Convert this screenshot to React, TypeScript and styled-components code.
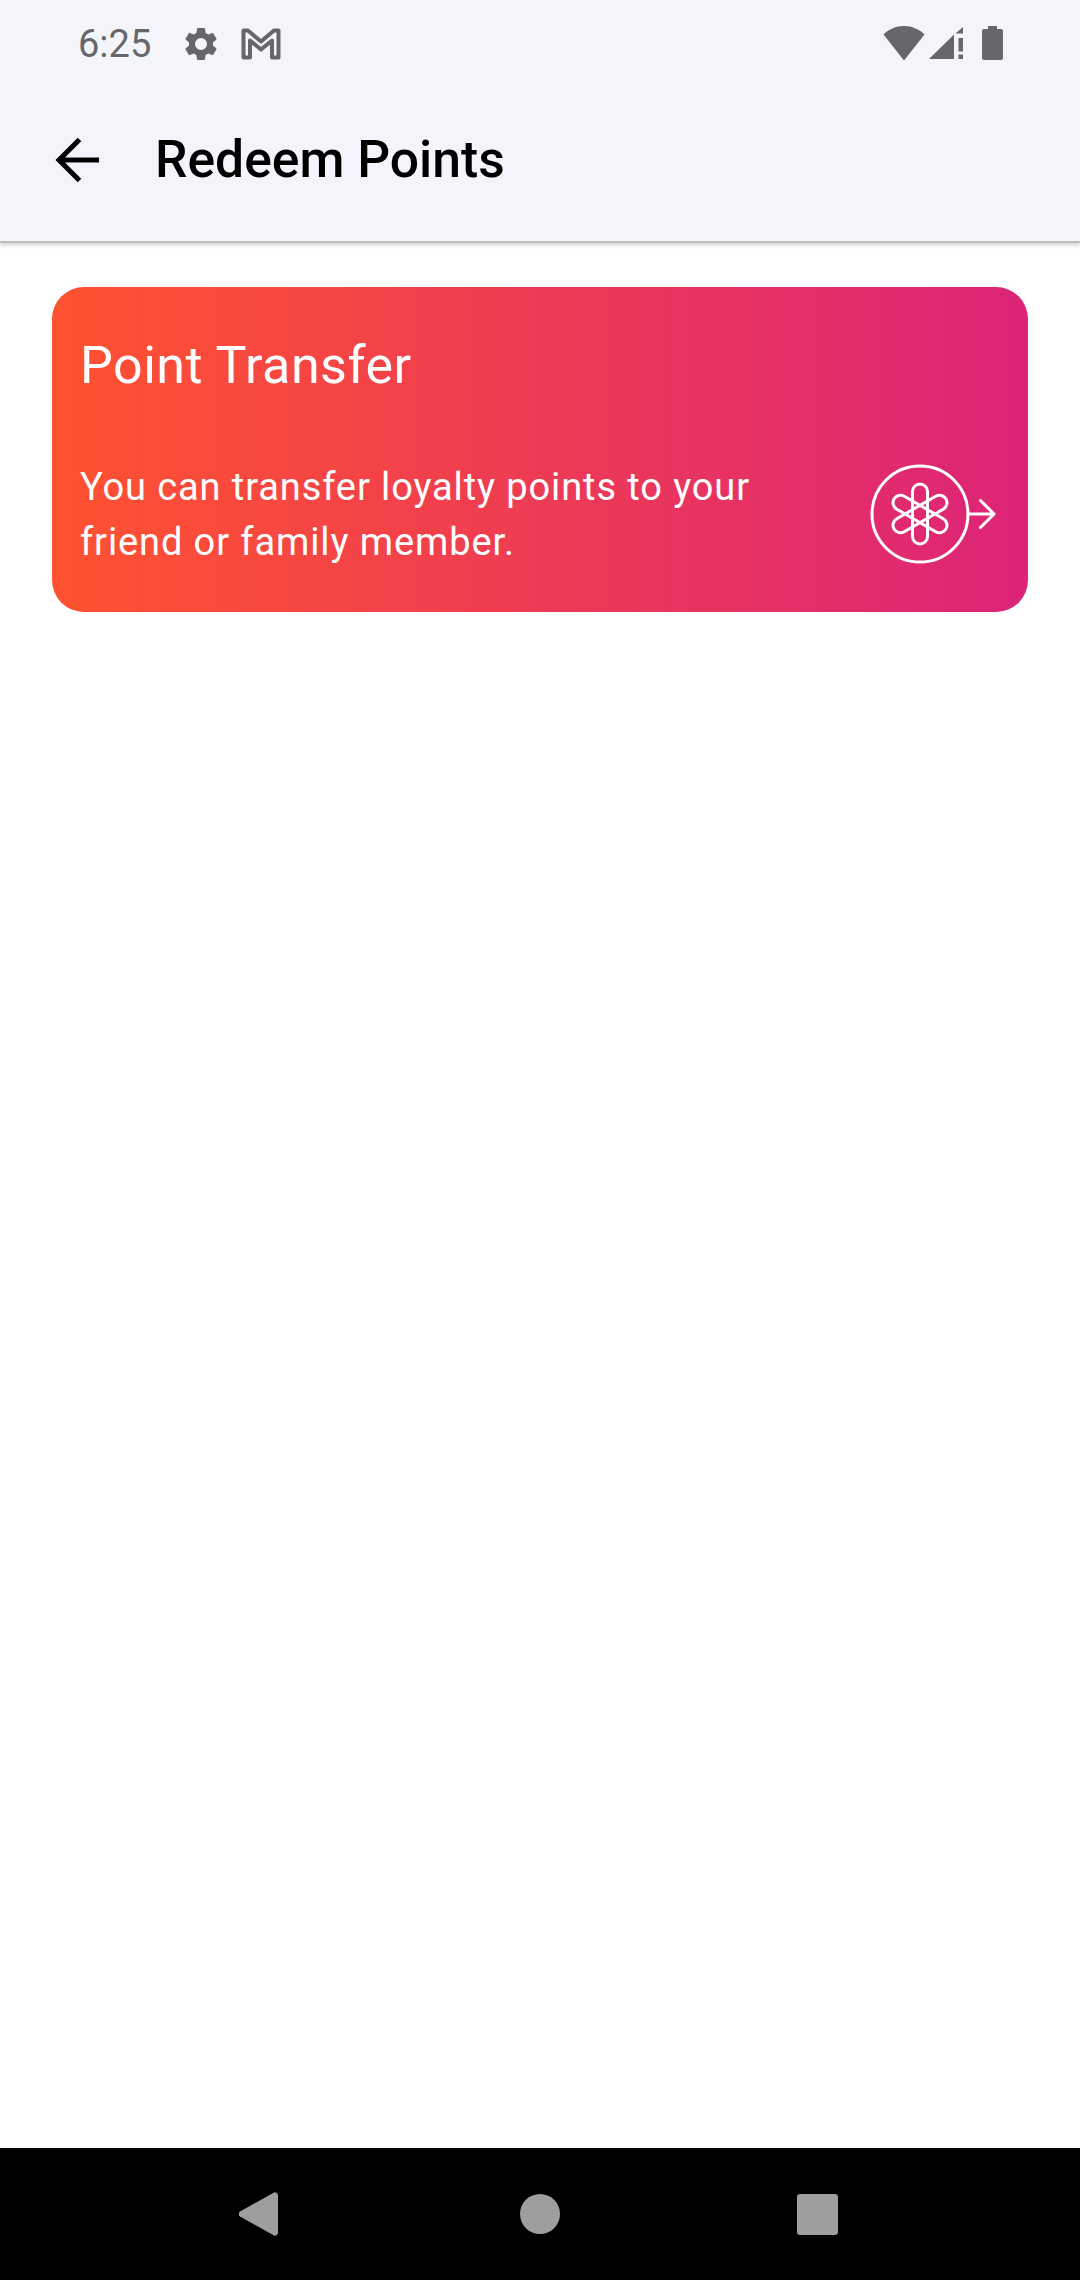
import React from "react";
import styled, { createGlobalStyle } from "styled-components";

const Global = createGlobalStyle`
  html, body { margin: 0; padding: 0; background: #fff; }
  body { font-family: Roboto, "Liberation Sans", sans-serif; }
`;

const Page = styled.div`
  width: 1080px;
  height: 2280px;
  display: flex;
  flex-direction: column;
  background: #fff;
  overflow: hidden;
`;

const Header = styled.header`
  height: 241px;
  flex: none;
  display: flex;
  flex-direction: column;
  background: #f4f5fa;
  border-bottom: 2px solid #bfbfc3;
  box-shadow: 0 2px 4px rgba(0, 0, 0, 0.18);
`;

const StatusBar = styled.div`
  height: 88px;
  flex: none;
  display: flex;
  align-items: center;
  padding: 0 76px 0 78px;
  color: #66676b;
`;

const Clock = styled.span`
  font-size: 38px;
  font-weight: 400;
  line-height: 88px;
  width: 83px;
`;

const StatusLeft = styled.div`
  display: flex;
  align-items: center;
  gap: 20px;
  flex: 1;
`;

const StatusRight = styled.div`
  display: flex;
  align-items: center;
  gap: 4px;
  margin-top: -2px;
`;

const BatteryIcon = styled.svg`
  margin-left: 12px;
`;

const Toolbar = styled.div`
  flex: 1;
  display: flex;
  align-items: center;
  padding: 0 0 10px 52px;
`;

const BackButton = styled.div`
  width: 103px;
  display: flex;
  align-items: center;
`;

const Title = styled.h1`
  margin: 0;
  font-size: 51.6px;
  font-weight: 500;
  line-height: 60px;
  color: #000;
`;

const Content = styled.main`
  flex: 1;
  padding: 44px 52px 0;
`;

const Card = styled.section`
  height: 325px;
  box-sizing: border-box;
  border-radius: 32px;
  padding: 50px 32px 0 28px;
  color: #fff;
  background: linear-gradient(90deg, #ff5230 0%, #dc2478 100%);
`;

const CardTitle = styled.h2`
  margin: 0 0 65px;
  font-size: 52px;
  font-weight: 400;
  line-height: 58px;
  letter-spacing: 0.5px;
`;

const CardRow = styled.div`
  display: flex;
  align-items: center;
  justify-content: space-between;
`;

const CardText = styled.p`
  margin: 0;
  width: 700px;
  font-size: 38px;
  font-weight: 400;
  line-height: 55px;
  letter-spacing: 0.9px;
`;

const CardIcon = styled.svg`
  margin-top: -2px;
`;

const NavBar = styled.nav`
  height: 132px;
  flex: none;
  display: flex;
  align-items: center;
  background: #000;
  padding: 0 0 0 239px;
`;

const NavIcon = styled.svg<{ $gap: number }>`
  display: block;
  flex: none;
  margin-right: ${(p) => p.$gap}px;
  fill: #9e9e9e;
`;

export default function App() {
  return (
    <Page>
      <Global />
      <Header>
        <StatusBar>
          <StatusLeft>
            <Clock>6:25</Clock>
            <svg width="40" height="40" viewBox="0 0 24 24" fill="#66676b">
              <path d="M19.14 12.94c.04-.3.06-.61.06-.94 0-.32-.02-.64-.07-.94l2.03-1.58a.49.49 0 0 0 .12-.61l-1.92-3.32a.49.49 0 0 0-.59-.22l-2.39.96c-.5-.38-1.03-.7-1.62-.94l-.36-2.54a.48.48 0 0 0-.48-.41h-3.84a.48.48 0 0 0-.47.41l-.36 2.54c-.59.24-1.13.57-1.62.94l-2.39-.96a.48.48 0 0 0-.59.22L2.74 8.87a.48.48 0 0 0 .12.61l2.03 1.58c-.05.3-.09.63-.09.94s.02.64.07.94l-2.03 1.58a.49.49 0 0 0-.12.61l1.92 3.32c.12.22.37.29.59.22l2.39-.96c.5.38 1.03.7 1.62.94l.36 2.54c.05.24.24.41.48.41h3.84c.24 0 .44-.17.47-.41l.36-2.54c.59-.24 1.13-.56 1.62-.94l2.39.96c.22.08.47 0 .59-.22l1.92-3.32a.47.47 0 0 0-.12-.61l-2.01-1.58zM12 15.6A3.6 3.6 0 1 1 12 8.4a3.6 3.6 0 0 1 0 7.2z" />
            </svg>
            <svg width="40" height="32" viewBox="0 0 40 32" fill="none" stroke="#66676b" strokeWidth="4" strokeLinejoin="round">
              <path d="M2.5 2.5h4.5L20 13.5 33 2.5h4.5v27h-6.5V12.5L20 21.5 9 12.5v17H2.5z" />
            </svg>
          </StatusLeft>
          <StatusRight>
            <svg width="42" height="36" viewBox="0 0 42 36" fill="#66676b">
              <path d="M21 35.5 0.5 9.5C6 4 13 1 21 1s15 3 20.5 8.5z" />
            </svg>
            <svg width="36" height="36" viewBox="0 0 36 36" fill="#66676b">
              <path d="M0 34 25 9.5V34zM34 2v6.5h-7.500z" />
              <path d="M29.500 13h4.500v13.500h-4.500zM29.500 29.500h4.500V34h-4.500z" />
            </svg>
            <BatteryIcon width="23" height="36" viewBox="0 0 23 36" fill="#66676b">
              <path d="M7 1h9v3h4a2 2 0 0 1 2 2v27a2 2 0 0 1-2 2H3a2 2 0 0 1-2-2V6a2 2 0 0 1 2-2h4z" />
            </BatteryIcon>
          </StatusRight>
        </StatusBar>
        <Toolbar>
          <BackButton>
            <svg width="48" height="48" viewBox="0 0 48 48" fill="none" stroke="#000" strokeWidth="5">
              <path d="M47 24H7M27.500 3.500 7 24l20.500 20.500" />
            </svg>
          </BackButton>
          <Title>Redeem Points</Title>
        </Toolbar>
      </Header>
      <Content>
        <Card>
          <CardTitle>Point Transfer</CardTitle>
          <CardRow>
            <CardText>You can transfer loyalty points to your friend or family member.</CardText>
            <CardIcon width="126" height="102" viewBox="0 0 126 102" fill="none" stroke="#fff" strokeWidth="3" strokeLinecap="round" strokeLinejoin="round">
              <circle cx="50" cy="51" r="48" />
              <rect x="42.500" y="21" width="15" height="60" rx="7.500" />
              <rect x="42.500" y="21" width="15" height="60" rx="7.500" transform="rotate(60 50 51)" />
              <rect x="42.500" y="21" width="15" height="60" rx="7.500" transform="rotate(-60 50 51)" />
              <path d="M98 51h26M110.500 37.500 124 51l-13.500 13.500" />
            </CardIcon>
          </CardRow>
        </Card>
      </Content>
      <NavBar>
        <NavIcon $gap={242} width="39" height="44" viewBox="0 0 39 44">
          <path d="M1 24.500a3 3 0 0 1 0-5L35 .5a3 3 0 0 1 4 2.500v38a3 3 0 0 1-4 2.500z" />
        </NavIcon>
        <NavIcon $gap={237} width="40" height="40" viewBox="0 0 40 40">
          <circle cx="20" cy="20" r="20" />
        </NavIcon>
        <NavIcon $gap={0} width="41" height="41" viewBox="0 0 41 41">
          <rect width="41" height="41" rx="3" />
        </NavIcon>
      </NavBar>
    </Page>
  );
}
